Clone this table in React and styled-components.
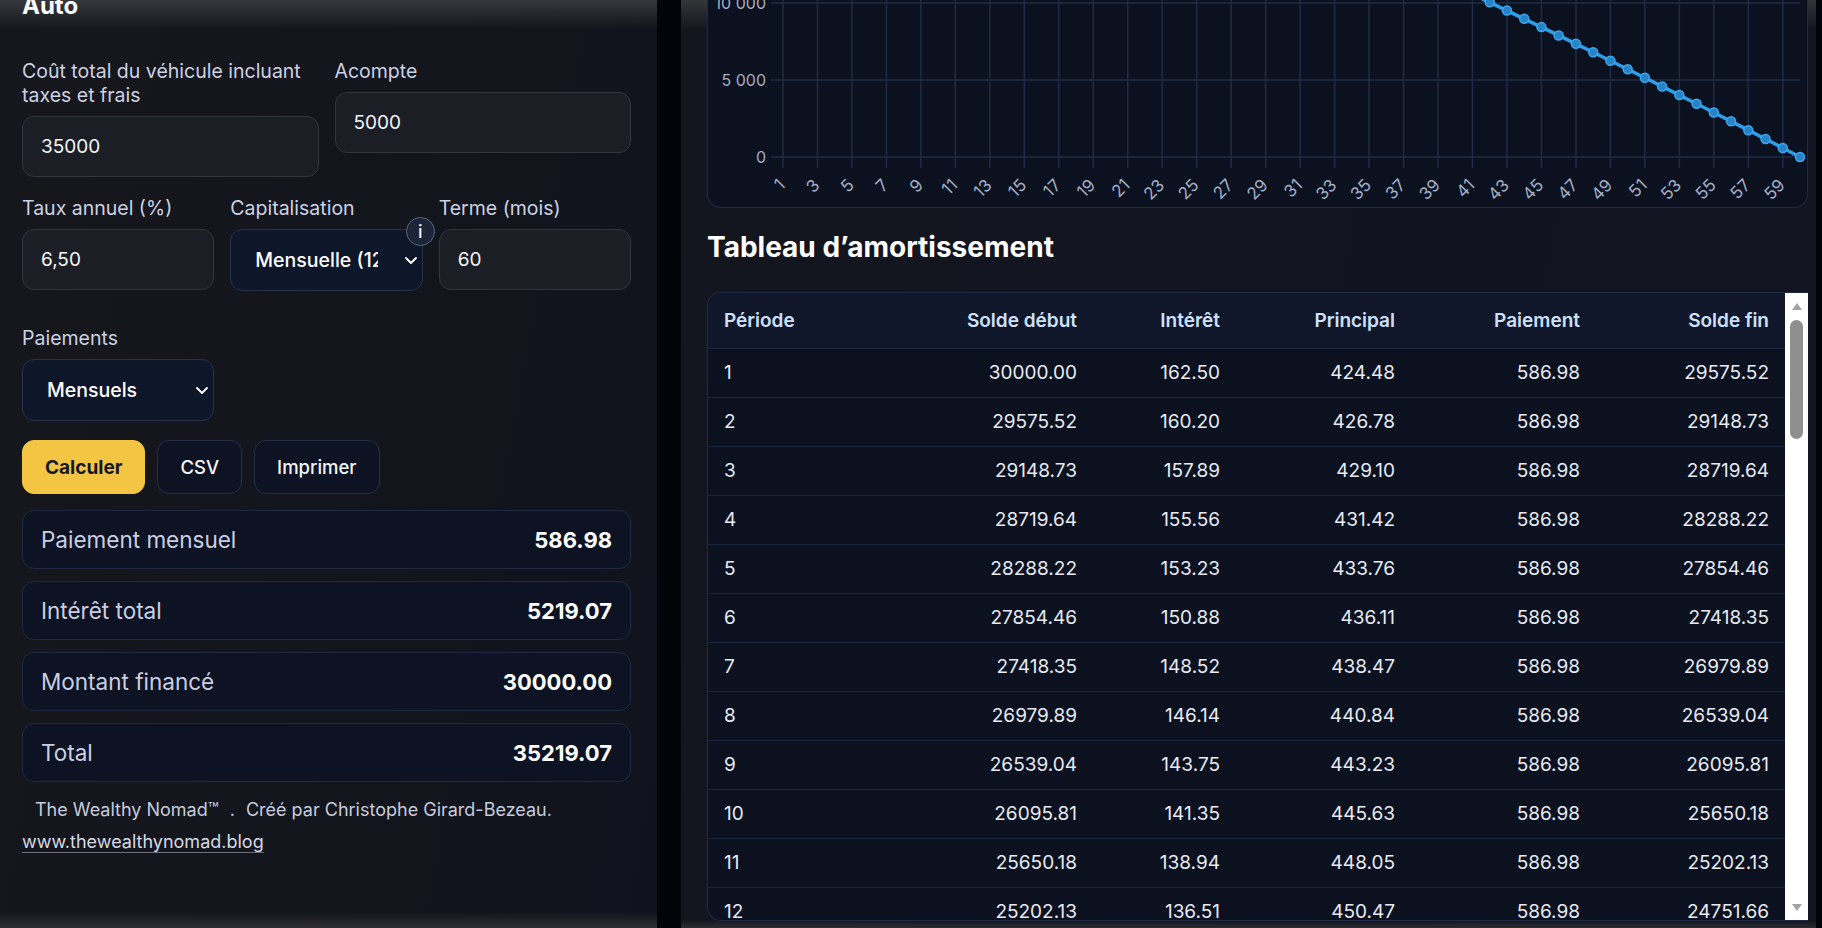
import React from "react";
import styled, { createGlobalStyle } from "styled-components";

const GlobalStyle = createGlobalStyle`
  * { box-sizing: border-box; }
  html, body {
    margin: 0;
    padding: 0;
    background: #030409;
  }
  body {
    font-family: Inter, "Noto Sans", "Liberation Sans", sans-serif;
    color: #e8ebf4;
    overflow: hidden;
  }
`;

const Layout = styled.div`
  display: flex;
  gap: 24px;
  height: 100vh;
  padding-right: 6px;
  overflow: hidden;
`;

const Sidebar = styled.aside`
  width: 657px;
  flex-shrink: 0;
  display: flex;
  flex-direction: column;
  padding: 0 26px 0 22px;
  background:
    linear-gradient(to bottom, #36373c 0px, rgba(22, 23, 28, 0) 30px),
    linear-gradient(to top, #2e2f34 0px, rgba(22, 23, 28, 0) 16px),
    linear-gradient(100deg, #16171c 0%, #13151c 55%, #10131d 100%);
`;

const Title = styled.h1`
  margin: -9px 0 0;
  font-size: 24px;
  line-height: 29px;
  font-weight: 700;
  color: #ffffff;
`;

const FieldGrid = styled.div`
  display: grid;
  grid-template-columns: repeat(${(p) => p.$cols}, minmax(0, 1fr));
  gap: 16px;
  align-items: start;
  margin-top: ${(p) => p.$top}px;
`;

const Field = styled.div`
  display: flex;
  flex-direction: column;
  gap: 9px;
  min-width: 0;
`;

const Label = styled.label`
  font-size: 19.5px;
  line-height: 24px;
  color: #ccd1e3;
`;

const Input = styled.input`
  height: 61px;
  width: 100%;
  padding: 0 18px;
  font-family: inherit;
  font-size: 19px;
  color: #f3f5fa;
  background: #1c1e25;
  border: 1px solid #32353d;
  border-radius: 12px;
  outline: none;
`;

const SelectWrap = styled.div`
  position: relative;
`;

const SelectBox = styled.div`
  height: 62px;
  display: flex;
  align-items: center;
  padding: 0 5px 0 24px;
  background: #0e1629;
  border: 1px solid #27314a;
  border-radius: 12px;
`;

const SelectText = styled.span`
  flex: 1;
  min-width: 0;
  overflow: hidden;
  white-space: nowrap;
  font-size: 19.5px;
  font-weight: 500;
  color: #ffffff;
`;

const Chevron = styled.svg`
  flex-shrink: 0;
  margin-left: 27px;
`;

const InfoBadge = styled.span`
  position: absolute;
  top: -12px;
  right: -12px;
  width: 29px;
  height: 29px;
  border-radius: 50%;
  background: #1b2537;
  border: 1.5px solid #56657f;
  color: #eef1f7;
  font-size: 18px;
  font-weight: 500;
  display: flex;
  align-items: center;
  justify-content: center;
`;

const ButtonRow = styled.div`
  display: flex;
  gap: 12px;
  margin-top: 19px;
`;

const Button = styled.button`
  height: 54px;
  padding: 0 22px;
  font-family: inherit;
  font-size: ${(p) => (p.$primary ? 19 : 18.5)}px;
  font-weight: ${(p) => (p.$primary ? 700 : 500)};
  color: ${(p) => (p.$primary ? "#141828" : "#f3f5fa")};
  background: ${(p) => (p.$primary ? "#f4c443" : "#0d1322")};
  border: 1px solid ${(p) => (p.$primary ? "#f4c443" : "#243049")};
  border-radius: 12px;
`;

const Results = styled.div`
  display: flex;
  flex-direction: column;
  gap: 12px;
  margin-top: 16px;
`;

const ResultCard = styled.div`
  height: 59px;
  display: flex;
  align-items: center;
  justify-content: space-between;
  padding: 0 18px;
  background: #0d1322;
  border: 1px solid #1f2944;
  border-radius: 12px;
`;

const ResultLabel = styled.span`
  font-size: 22.5px;
  color: #c9cfe3;
`;

const ResultValue = styled.span`
  font-size: 22px;
  font-weight: 700;
  color: #ffffff;
`;

const Footer = styled.div`
  margin-top: 12px;
  font-size: 18px;
  line-height: 32px;
  color: #c6cbdc;
`;

const Credit = styled.div`
  padding-left: 13px;
`;

const Dot = styled.span`
  margin: 0 11px;
`;

const FooterLink = styled.a`
  color: #d6d9e4;
  text-decoration: none;
  border-bottom: 1px solid #6a6e7a;
`;

const Main = styled.main`
  flex: 1;
  min-width: 0;
  display: flex;
  flex-direction: column;
  padding: 0 8px 7px 26px;
  background:
    linear-gradient(to bottom, #35363b 0px, rgba(20, 22, 30, 0) 30px),
    linear-gradient(to top, #2c2d32 0px, rgba(20, 22, 30, 0) 8px),
    linear-gradient(100deg, #14161e 0%, #111420 60%, #121420 100%);
`;

const ChartCard = styled.div`
  flex-shrink: 0;
  height: 208px;
  background: #0c111f;
  border: 1px solid #1f2a44;
  border-top: none;
  border-radius: 0 0 14px 14px;
  overflow: hidden;
`;

const Heading = styled.h2`
  margin: 23px 0 29px;
  font-size: 28px;
  line-height: 32px;
  font-weight: 700;
  color: #ffffff;
`;

const TableFrame = styled.div`
  flex: 1;
  min-height: 0;
  display: flex;
  background: #0c111f;
  border: 1px solid #1f2a44;
  border-right: none;
  border-radius: 14px 0 0 14px;
  overflow: hidden;
`;

const TableClip = styled.div`
  flex: 1;
  min-width: 0;
  overflow: hidden;
`;

const Table = styled.table`
  width: 100%;
  table-layout: fixed;
  border-collapse: separate;
  border-spacing: 0;
`;

const Col = styled.col`
  width: ${(p) => p.$w}px;
`;

const HeadCell = styled.th`
  padding: 16px 16px 15px;
  font-size: 19px;
  line-height: 24px;
  font-weight: 600;
  color: #cfe0fb;
  background: #10172b;
  text-align: ${(p) => p.$align};
  border-bottom: 1px solid #1d2742;
`;

const Cell = styled.td`
  padding: 12px 16px;
  font-size: 19px;
  line-height: 24px;
  color: #e7eaf3;
  text-align: ${(p) => p.$align};
  border-bottom: 1px solid #1b2440;
  white-space: nowrap;
`;

const ScrollTrack = styled.div`
  width: 23px;
  flex-shrink: 0;
  display: flex;
  flex-direction: column;
  align-items: center;
  padding: 10px 0 9px;
  background: #ffffff;
`;

const ArrowUp = styled.span`
  width: 0;
  height: 0;
  border-left: 5.5px solid transparent;
  border-right: 5.5px solid transparent;
  border-bottom: 7px solid #a3a3a3;
`;

const ArrowDown = styled.span`
  margin-top: auto;
  width: 0;
  height: 0;
  border-left: 5.5px solid transparent;
  border-right: 5.5px solid transparent;
  border-top: 7px solid #a3a3a3;
`;

const Thumb = styled.span`
  margin-top: 10px;
  width: 13px;
  height: 119px;
  border-radius: 7px;
  background: #8f8f8f;
`;

const columns = [
  { label: "Période", w: 160, align: "left" },
  { label: "Solde début", w: 225, align: "right" },
  { label: "Intérêt", w: 143, align: "right" },
  { label: "Principal", w: 175, align: "right" },
  { label: "Paiement", w: 185, align: "right" },
  { label: "Solde fin", w: 189, align: "right" },
];

const rows = [
  ["1", "30000.00", "162.50", "424.48", "586.98", "29575.52"],
  ["2", "29575.52", "160.20", "426.78", "586.98", "29148.73"],
  ["3", "29148.73", "157.89", "429.10", "586.98", "28719.64"],
  ["4", "28719.64", "155.56", "431.42", "586.98", "28288.22"],
  ["5", "28288.22", "153.23", "433.76", "586.98", "27854.46"],
  ["6", "27854.46", "150.88", "436.11", "586.98", "27418.35"],
  ["7", "27418.35", "148.52", "438.47", "586.98", "26979.89"],
  ["8", "26979.89", "146.14", "440.84", "586.98", "26539.04"],
  ["9", "26539.04", "143.75", "443.23", "586.98", "26095.81"],
  ["10", "26095.81", "141.35", "445.63", "586.98", "25650.18"],
  ["11", "25650.18", "138.94", "448.05", "586.98", "25202.13"],
  ["12", "25202.13", "136.51", "450.47", "586.98", "24751.66"],
];

const results = [
  ["Paiement mensuel", "586.98"],
  ["Intérêt total", "5219.07"],
  ["Montant financé", "30000.00"],
  ["Total", "35219.07"],
];

// solde fin de chaque période, pour la courbe
function balances() {
  const r = 0.065 / 12;
  const n = 60;
  const pmt = (30000 * r) / (1 - Math.pow(1 + r, -n));
  let bal = 30000;
  const out = [];
  for (let k = 1; k <= n; k++) {
    bal -= pmt - bal * r;
    out.push(Math.max(bal, 0));
  }
  return out;
}

const X0 = 75;
const X1 = 1092;
const xOf = (k) => X0 + ((k - 1) * (X1 - X0)) / 59;
const yOf = (v) => 157 - v * 0.0154;
const GRID = "#1f2b46";
const TICK = "#a2aec5";

function BalanceChart() {
  const data = balances();
  const pts = data.map((v, i) => [xOf(i + 1), yOf(v)]);
  const odd = Array.from({ length: 30 }, (_, i) => i * 2 + 1);

  return (
    <svg width="1099" height="207" style={{ display: "block" }}>
      {odd.map((k) => (
        <line key={"v" + k} x1={xOf(k)} x2={xOf(k)} y1={0} y2={168} stroke={GRID} strokeWidth="1.5" />
      ))}
      {[0, 5000, 10000].map((v) => (
        <line key={"h" + v} x1={63} x2={X1} y1={yOf(v)} y2={yOf(v)} stroke={GRID} strokeWidth="1.5" />
      ))}
      {[
        [0, "0"],
        [5000, "5 000"],
        [10000, "10 000"],
      ].map(([v, t]) => (
        <text key={t} x={58} y={yOf(v) + 5.5} textAnchor="end" fontSize="16" fill={TICK} fontFamily="Inter, sans-serif">
          {t}
        </text>
      ))}
      {odd.map((k) => (
        <text
          key={"l" + k}
          x={xOf(k) - 1}
          y={182}
          dy="0.35em"
          textAnchor="end"
          fontSize="17"
          fill={TICK}
          fontFamily="Inter, sans-serif"
          transform={`rotate(-45 ${xOf(k) - 1} 182)`}
        >
          {k}
        </text>
      ))}
      <polyline points={pts.map((p) => p.join(",")).join(" ")} fill="none" stroke="#2d9fea" strokeWidth="3.5" strokeLinejoin="round" />
      {pts
        .filter((p) => p[1] > -10)
        .map((p, i) => (
          <circle key={"c" + i} cx={p[0]} cy={p[1]} r="4.5" fill="#2783c4" stroke="#3aa7f0" strokeWidth="1.5" />
        ))}
    </svg>
  );
}

function Select({ children }) {
  return (
    <SelectBox>
      <SelectText>{children}</SelectText>
      <Chevron width="12" height="7" viewBox="0 0 12 7">
        <polyline points="1,1 6,6 11,1" fill="none" stroke="#ffffff" strokeWidth="1.8" strokeLinecap="round" strokeLinejoin="round" />
      </Chevron>
    </SelectBox>
  );
}

export default function App() {
  return (
    <>
      <GlobalStyle />
      <Layout>
        <Sidebar>
          <Title>Auto</Title>

          <FieldGrid $cols={2} $top={39}>
            <Field>
              <Label>Coût total du véhicule incluant taxes et frais</Label>
              <Input readOnly defaultValue="35000" />
            </Field>
            <Field>
              <Label>Acompte</Label>
              <Input readOnly defaultValue="5000" />
            </Field>
          </FieldGrid>

          <FieldGrid $cols={3} $top={19}>
            <Field>
              <Label>Taux annuel (%)</Label>
              <Input readOnly defaultValue="6,50" />
            </Field>
            <Field>
              <Label>Capitalisation</Label>
              <SelectWrap>
                <Select>Mensuelle (12)</Select>
                <InfoBadge>i</InfoBadge>
              </SelectWrap>
            </Field>
            <Field>
              <Label>Terme (mois)</Label>
              <Input readOnly defaultValue="60" />
            </Field>
          </FieldGrid>

          <FieldGrid $cols={3} $top={35}>
            <Field>
              <Label>Paiements</Label>
              <Select>Mensuels</Select>
            </Field>
          </FieldGrid>

          <ButtonRow>
            <Button $primary>Calculer</Button>
            <Button>CSV</Button>
            <Button>Imprimer</Button>
          </ButtonRow>

          <Results>
            {results.map(([label, value]) => (
              <ResultCard key={label}>
                <ResultLabel>{label}</ResultLabel>
                <ResultValue>{value}</ResultValue>
              </ResultCard>
            ))}
          </Results>

          <Footer>
            <Credit>
              The Wealthy Nomad™<Dot>.</Dot>Créé par Christophe Girard-Bezeau.
            </Credit>
            <div>
              <FooterLink href="#">www.thewealthynomad.blog</FooterLink>
            </div>
          </Footer>
        </Sidebar>

        <Main>
          <ChartCard>
            <BalanceChart />
          </ChartCard>

          <Heading>Tableau d’amortissement</Heading>

          <TableFrame>
            <TableClip>
              <Table>
                <colgroup>
                  {columns.map((c) => (
                    <Col key={c.label} $w={c.w} />
                  ))}
                </colgroup>
                <thead>
                  <tr>
                    {columns.map((c) => (
                      <HeadCell key={c.label} $align={c.align}>
                        {c.label}
                      </HeadCell>
                    ))}
                  </tr>
                </thead>
                <tbody>
                  {rows.map((row) => (
                    <tr key={row[0]}>
                      {row.map((v, i) => (
                        <Cell key={i} $align={columns[i].align}>
                          {v}
                        </Cell>
                      ))}
                    </tr>
                  ))}
                </tbody>
              </Table>
            </TableClip>
            <ScrollTrack>
              <ArrowUp />
              <Thumb />
              <ArrowDown />
            </ScrollTrack>
          </TableFrame>
        </Main>
      </Layout>
    </>
  );
}
